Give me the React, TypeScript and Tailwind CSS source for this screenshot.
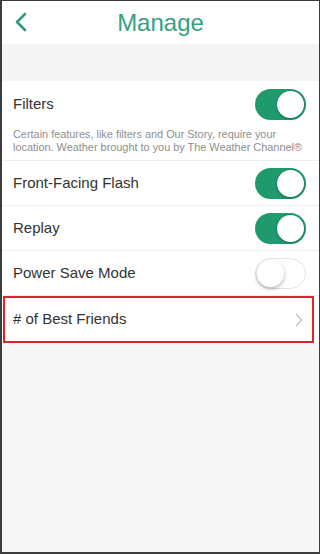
import React from "react";

function Toggle({ on }: { on: boolean }) {
  return on ? (
    <div className="relative h-[31px] w-[51px] shrink-0 rounded-full bg-[#1e9a6d]">
      <div className="absolute right-[2px] top-[2px] h-[27px] w-[27px] rounded-full bg-white shadow-[0_1px_3px_rgba(0,0,0,0.3)]" />
    </div>
  ) : (
    <div className="relative h-[31px] w-[51px] shrink-0 rounded-full border border-[#e3e3e3] bg-white">
      <div className="absolute left-[1px] top-[1px] h-[27px] w-[27px] rounded-full bg-white shadow-[0_2px_4px_rgba(0,0,0,0.28)]" />
    </div>
  );
}

function Row({ label, on }: { label: string; on: boolean }) {
  return (
    <div className="flex h-[45px] items-center justify-between border-b border-[#eeeeee] pl-[11px] pr-[13px]">
      <span className="text-[15px] text-[#333333]">{label}</span>
      <Toggle on={on} />
    </div>
  );
}

export default function App() {
  return (
    <div
      className="flex h-[554px] w-[320px] flex-col border-b-2 border-l-2 border-r border-t border-[#3c3c3c] bg-[#f6f6f6]"
      style={{ fontFamily: '"Liberation Sans", Arial, sans-serif' }}
    >
      <div className="relative flex h-[43px] items-center justify-center bg-white">
        <svg
          className="absolute left-[12px] top-[11px]"
          width="14"
          height="20"
          viewBox="0 0 14 20"
          fill="none"
          stroke="#2f9c78"
          strokeWidth="2.6"
          strokeLinecap="round"
          strokeLinejoin="round"
        >
          <polyline points="11,2 3,10 11,18" />
        </svg>
        <span className="text-[24px] text-[#35a27f]">Manage</span>
      </div>
      <div className="h-[37px] bg-[#f5f5f5]" />
      <div className="bg-white">
        <div className="border-b border-[#eeeeee]">
          <div className="flex h-[47px] items-center justify-between pl-[11px] pr-[13px]">
            <span className="text-[15px] text-[#333333]">Filters</span>
            <Toggle on={true} />
          </div>
          <div className="whitespace-nowrap pb-[6px] pl-[11px] text-[10.9px] leading-[13px] text-[#8e8e8e]">
            <div>Certain features, like filters and Our Story, require your</div>
            <div>location. Weather brought to you by The Weather Channel®</div>
          </div>
        </div>
        <Row label="Front-Facing Flash" on={true} />
        <Row label="Replay" on={true} />
        <Row label="Power Save Mode" on={false} />
        <div className="ml-[1px] flex h-[47px] w-[311px] items-center justify-between border-2 border-[#d9262c] pl-[8px] pr-[9px]">
          <span className="text-[15px] text-[#333333]">
            # of Best Friends
          </span>
          <svg
            width="8"
            height="14"
            viewBox="0 0 8 14"
            fill="none"
            stroke="#c4c4c8"
            strokeWidth="1.6"
            strokeLinecap="round"
            strokeLinejoin="round"
          >
            <polyline points="1.5,1.5 6.5,7 1.5,12.5" />
          </svg>
        </div>
      </div>
    </div>
  );
}
